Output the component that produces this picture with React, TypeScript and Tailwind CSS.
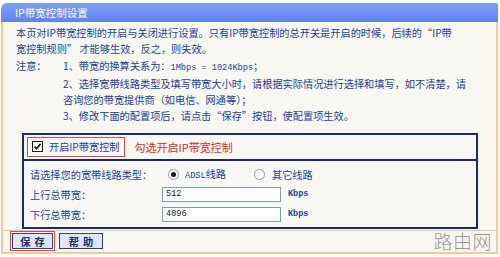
import React from "react";

const CJK = { fontFamily: '"Noto Sans CJK SC", "Noto Sans", sans-serif' };
const MONO = { fontFamily: '"Liberation Mono", "DejaVu Sans Mono", monospace' };

function Radio({ checked }: { checked?: boolean }) {
  return (
    <span className="inline-flex items-center justify-center w-[11px] h-[11px] rounded-full border border-[#8a9bb5] bg-white">
      {checked && <span className="w-[5px] h-[5px] rounded-full bg-[#1a1a1a]" />}
    </span>
  );
}

export default function App() {
  return (
    <div className="w-[500px] h-[257px] bg-white pt-[3px] pl-[1px] overflow-hidden" style={CJK}>
      <div className="w-[497px] h-[251px] flex flex-col">
        <div className="h-[19px] shrink-0 rounded-tl-[6px] rounded-tr-[2px] bg-gradient-to-b from-[#80a0f4] to-[#5f83ec] text-white text-[10.5px] leading-[19px] pl-[14px]">
          IP带宽控制设置
        </div>
        <div className="flex-1 flex flex-col border-x-2 border-b-2 border-[#f4cc93] bg-[#f8f7f2]">
          <div className="pt-[3px] pl-[13px] text-[10.2px] leading-[16.3px] text-[#23409a] whitespace-nowrap">
            <div>本页对IP带宽控制的开启与关闭进行设置。只有IP带宽控制的总开关是开启的时候，后续的“IP带</div>
            <div>宽控制规则” 才能够生效，反之，则失效。</div>
            <div className="flex">
              <span className="w-[47px]">注意：</span>
              <span>
                1、带宽的换算关系为：
                <span style={MONO} className="text-[8.6px]">1Mbps = 1024Kbps</span>；
              </span>
            </div>
            <div className="pl-[47px]">2、选择宽带线路类型及填写带宽大小时，请根据实际情况进行选择和填写，如不清楚，请</div>
            <div className="pl-[47px]">咨询您的带宽提供商（如电信、网通等）；</div>
            <div className="pl-[47px]">3、修改下面的配置项后，请点击“保存”按钮，使配置项生效。</div>
          </div>

          <div className="mt-[8px] ml-[19px] w-[456px] border-2 border-[#1b2a6e] bg-[#f9f8f4] text-[10.2px] text-[#23409a]">
            <div className="h-[26px] flex items-center border-b-2 border-[#1b2a6e] pl-[3px]">
              <div className="h-[20px] flex items-center gap-[6px] border-[1.5px] border-[#e8463c] pl-[4px] pr-[4px]">
                <span className="w-[11px] h-[11px] border border-[#1c1c1c] bg-white flex items-center justify-center">
                  <svg width="9" height="9" viewBox="0 0 9 9">
                    <path d="M1.5 4.5 L3.5 6.8 L7.6 1.8" stroke="#111" strokeWidth="1.6" fill="none" />
                  </svg>
                </span>
                <span>开启IP带宽控制</span>
              </div>
              <span className="ml-[10px] text-[#e02a2a] text-[11px]">勾选开启IP带宽控制</span>
            </div>
            <div className="pt-[4px] pb-[2px] pl-[6px]">
              <div className="h-[20px] flex items-center">
                <span className="w-[138px]">请选择您的宽带线路类型：</span>
                <Radio checked />
                <span className="ml-[6px] w-[69px]">
                  <span style={MONO} className="text-[8.6px]">ADSL</span>线路
                </span>
                <Radio />
                <span className="ml-[7px]">其它线路</span>
              </div>
              <div className="h-[20px] flex items-center">
                <span className="w-[132px]">上行总带宽：</span>
                <span className="w-[119px] h-[15px] border border-[#7f9db9] bg-white pl-[3px] leading-[13px] text-[#222] text-[8.6px]" style={MONO}>512</span>
                <span className="ml-[7px] text-[8.5px] font-bold text-[#23409a]" style={MONO}>Kbps</span>
              </div>
              <div className="h-[20px] flex items-center">
                <span className="w-[132px]">下行总带宽：</span>
                <span className="w-[119px] h-[15px] border border-[#7f9db9] bg-white pl-[3px] leading-[13px] text-[#222] text-[8.6px]" style={MONO}>4096</span>
                <span className="ml-[7px] text-[8.5px] font-bold text-[#23409a]" style={MONO}>Kbps</span>
              </div>
            </div>
          </div>

          <div className="mt-[1px] flex-1 border-t border-[#e2cca8] flex items-center pl-[7px] pr-[4px]">
            <div className="border-[1.5px] border-[#e8463c] p-[1px]">
              <div className="w-[41px] h-[16px] border border-[#33407a] bg-[#dfe5f5] text-[#1b2a6e] text-[10.2px] font-bold flex items-center justify-center tracking-[4px] pl-[4px]">
                保存
              </div>
            </div>
            <div className="ml-[4px] w-[44px] h-[16px] border border-[#33407a] bg-[#dfe5f5] text-[#1b2a6e] text-[10.2px] font-bold flex items-center justify-center tracking-[4px] pl-[4px]">
              帮助
            </div>
            <div className="ml-auto text-[19px] font-light text-[#9a9a9a] leading-[20px] tracking-[0.5px]">路由网</div>
          </div>
        </div>
      </div>
    </div>
  );
}
